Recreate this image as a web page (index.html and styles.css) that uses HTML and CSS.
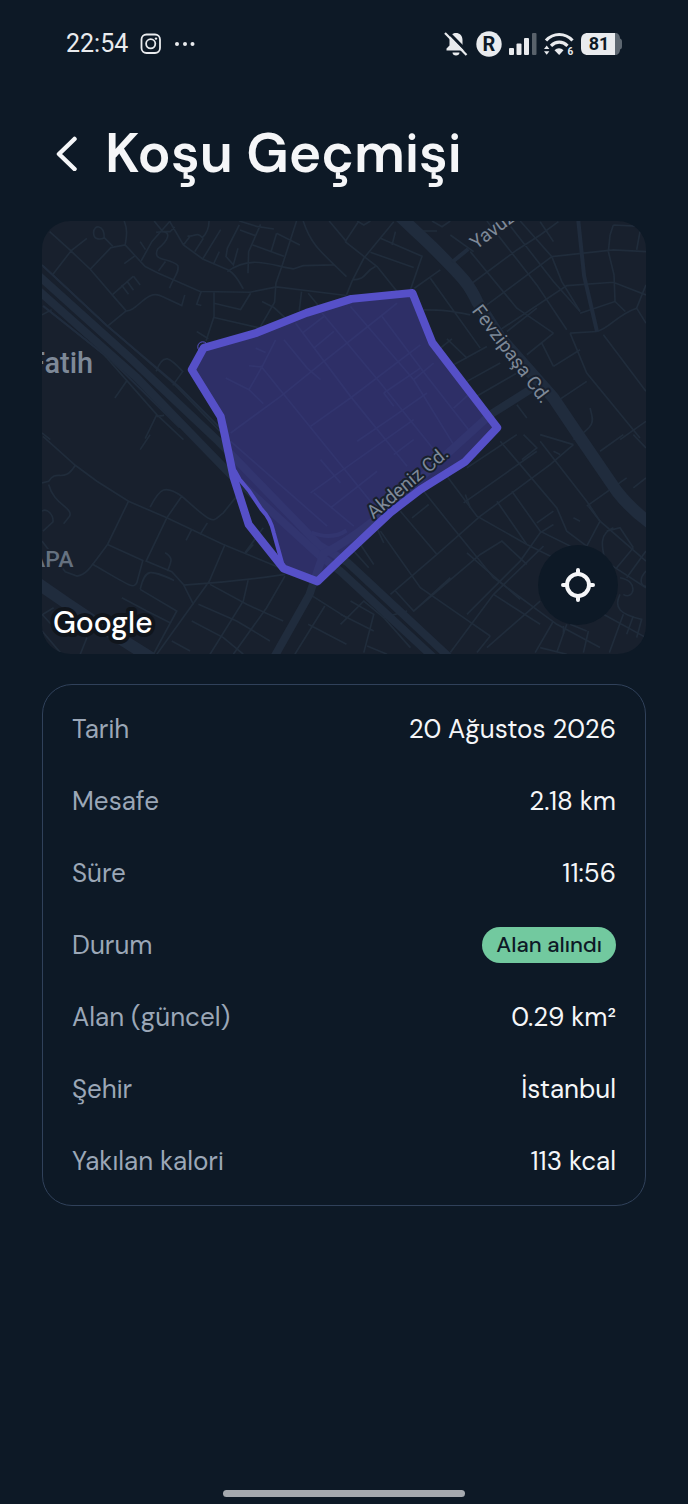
FILE: index.html
```html
<!DOCTYPE html>
<html lang="tr">
<head>
  <meta charset="UTF-8">
  <meta name="viewport" content="width=device-width, initial-scale=1.0">
  <title>Koşu Geçmişi</title>
  <link rel="stylesheet" href="styles.css">
</head>
<body>
  <div class="status-bar">
    <div class="status-group">
      <span class="clock">22:54</span>
      <svg class="icon-instagram" width="22" height="22" viewBox="0 0 22 22" fill="none" stroke="currentColor" stroke-width="1.8">
        <rect x="1.5" y="1.5" width="18.5" height="18.5" rx="5"/>
        <circle cx="10.7" cy="10.8" r="4.6"/>
        <circle cx="16" cy="5.6" r="1.2" fill="currentColor" stroke="none"/>
      </svg>
      <svg width="22" height="6" viewBox="0 0 22 6" fill="currentColor">
        <circle cx="3" cy="3" r="2"/>
        <circle cx="11" cy="3" r="2"/>
        <circle cx="18.5" cy="3" r="2"/>
      </svg>
    </div>
    <div class="status-group status-right">
      <svg width="26" height="28" viewBox="0 0 26 28">
        <path d="M3.5 20.5v-2l3-3V10c0-4.5 3-7 6.5-7s6.5 2.5 6.5 7v5.500l3 3v2z" fill="currentColor"/>
        <path d="M9.5 22.5h7c0 2-1.5 3-3.5 3s-3.5-1-3.5-3z" fill="currentColor"/>
        <path d="M4 1 25.5 23" stroke="#0d1926" stroke-width="3"/>
        <path d="M2 3 23.5 25" stroke="currentColor" stroke-width="2.2"/>
      </svg>
      <svg width="26" height="26" viewBox="0 0 26 26">
        <circle cx="13" cy="13" r="12.7" fill="currentColor"/>
        <text class="badge-letter" x="13" y="20" text-anchor="middle">R</text>
      </svg>
      <svg width="28" height="24" viewBox="0 0 28 24" fill="currentColor">
        <rect x="0" y="16" width="5" height="7" rx="1"/>
        <rect x="7.5" y="11.5" width="5" height="11.5" rx="1"/>
        <rect x="15" y="6" width="5" height="17" rx="1"/>
        <rect x="23" y="1" width="4.5" height="22" rx="1" opacity="0.35"/>
      </svg>
      <svg width="30" height="26" viewBox="0 0 30 26">
        <path d="M2 9.5C9.5 1.5 21 1.5 28.5 9.5" fill="none" stroke="currentColor" stroke-width="3.2"/>
        <path d="M7 14.8c5-5 11.5-5 16.5 0" fill="none" stroke="currentColor" stroke-width="3.2"/>
        <path d="M15.2 24 10.5 19.2c2.5-2.7 6.5-2.7 9 0z" fill="currentColor"/>
        <path d="M0 18 2.7 14.5 5.4 18zM0 20.2h5.400L2.7 23.7z" fill="currentColor"/>
        <text class="wifi-gen" x="23.5" y="24">6</text>
      </svg>
      <svg width="41" height="24" viewBox="0 0 41 24">
        <path d="M34 1c3 0 5 2 5 5.5 1.5.5 2 1.5 2 3v5c0 1.5-.5 2.500-2 3 0 3.5-2 5.5-5 5.5z" fill="#5d6771"/>
        <path d="M7 1h27v22H7c-4.500 0-7-2.500-7-7V8c0-4.500 2.500-7 7-7z" fill="currentColor"/>
        <text class="battery-level" x="18" y="18" text-anchor="middle">81</text>
      </svg>
    </div>
  </div>

  <header class="page-header">
    <button class="back-btn" type="button" aria-label="Geri">
      <svg width="24" height="36" viewBox="0 0 24 36" fill="none" stroke="currentColor" stroke-width="4.5" stroke-linecap="round" stroke-linejoin="round">
        <path d="M18.5 4 3 19l15.5 15"/>
      </svg>
    </button>
    <h1>Koşu Geçmişi</h1>
  </header>

  <main class="content">
    <section class="map">
      <svg class="map-canvas" viewBox="0 0 605 434" role="img" aria-label="Koşu alanı haritası">
        <!-- side streets, one group per quarter of the map -->
        <g class="streets" transform="translate(-5 -6) scale(0.3333)">
          <path d="M38 50 102 108 160 163 226 240 268 288M102 108 48 178M102 108 150 70M160 163 222 98 265 90 325 155 365 175 490 230 640 232 720 216 930 242"/>
          <path d="M202 68c0-40-32-40-32-15s25 20 32 15l26 26M262 18c12 30 6 50 3 72M295 122 262 146M310 80 326 104M400 18 345 80 313 138M226 240 290 184M254 210 275 238M270 198 290 226M290 184 310 210"/>
          <path d="M358 52c60-10 30 30 5 50-20 40 40 25 60 50 6 18-12 35-25 68M365 168 386 140M352 18 378 50 400 50 414 36M398 18 440 90 498 132 575 165C600 180 606 200 620 222M440 90 460 64M500 70 474 110M517 18c0 20-10 40-20 50-18-20-24 0-45-5"/>
          <path d="M552 44 498 132M608 30 572 100 568 125 590 150 604 100M548 110 530 148M572 170C640 120 700 150 770 162L800 152 892 150M608 18 660 34 712 42M610 45 656 62M672 28 636 110 634 175M648 90 742 124M720 55 704 108M720 55 790 90M780 18 738 148 718 205 714 262 660 355M800 18C820 80 840 100 930 185M878 18 930 80"/>
          <path d="M268 288C300 292 330 220 375 244L435 272 444 240M268 288 212 334M494 228 480 268 494 272M532 232V305L508 378M532 265 612 284 642 235M532 308 672 340M676 260 712 278 790 350M795 230 788 288M815 235 860 290"/>
          <path d="M15 150 208 330 410 506 550 650M15 300 44 285M40 290 200 418 360 600 440 675M270 498 234 550M360 600 325 672M360 605 382 602M358 470C380 410 400 430 438 470L408 512M15 655 40 675M480 350 515 372"/>
        </g>
        <g class="streets" transform="translate(299 -6) scale(0.3333)">
          <path d="M55 18 14 80M90 18 70 30 50 18M14 80 75 128 110 155 170 230M160 20 70 130 35 198 18 240M120 70 245 124 210 225M90 112 220 158M165 50 155 90M35 195C80 195 70 170 105 155M275 18 305 35 330 18M240 48 290 48"/>
          <path d="M222 220 300 165M270 190 420 400M250 285C310 285 330 288 390 300M300 400 335 372M320 372 380 430M390 110 530 280 640 355M395 205 530 105 600 60 655 20M440 18 590 210 680 345M500 20 640 200 720 290M330 60 400 110"/>
          <path d="M540 18 635 125 820 105 918 110M635 125 665 200 720 290M440 270 635 125M480 345 680 212 820 202 918 240M600 20 640 80M810 60 805 110 822 180 825 260 720 295M820 30 810 60M900 50 890 105M825 260 856 290M770 350C810 340 830 300 890 280L918 210M890 280 918 325M820 30 918 35"/>
          <path d="M340 450 440 395M500 350 590 280M380 500 480 445M400 550 530 475M560 420 640 355M605 385 640 455M690 355 740 475 900 670M790 360 918 530M640 455 720 405M690 355 770 350M650 560 740 500M750 580C760 620 770 630 700 675M530 570 560 610M840 675 918 620"/>
        </g>
        <g class="streets" transform="translate(-5 214) scale(0.3333)">
          <path d="M18 5 115 92 180 140 275 200 390 250 560 330 735 402M340 0 310 45M115 92C80 150 60 100 35 140L15 145M35 150C50 210 110 220 98 245L80 268M15 230C30 220 50 240 48 262L18 290M275 200 212 330C160 400 150 420 120 425L85 412 15 320"/>
          <path d="M340 218C370 160 385 150 435 185L390 250 328 380 405 412 440 450 470 510M435 185C540 280 525 260 560 235L600 185M465 285 448 318M512 265 490 300M212 330 318 378 300 445C290 465 280 455 165 388M385 355C410 370 405 380 392 410M310 465C325 400 340 405 412 438"/>
          <path d="M565 330 518 440 360 660M440 452C560 445 680 430 745 420M255 490 330 530 400 565M310 465 420 530 350 660M520 450 630 510 740 560M635 435 620 500 520 660M745 425 690 520 590 660M485 510 600 560 700 620M465 560 560 610 620 660M405 620 460 650M650 330 628 355M680 280 625 355"/>
          <path d="M820 480 930 550M865 515 775 660M815 570 930 630M15 540 70 600M15 590 70 655M150 610 130 660M15 620 60 660M18 540 50 520"/>
        </g>
        <g class="streets" transform="translate(299 214) scale(0.3333)">
          <path d="M250 170 330 270 460 430 650 570 780 640M180 230 290 360M120 290 240 460 370 550 450 605M90 240 130 325M60 330 100 390M320 125 410 245 560 330 660 380"/>
          <path d="M150 480 290 360 420 245 630 90 700 30M370 205 590 50M375 180 390 220M380 100 530 0M480 20 540 90 650 220 680 290 740 335M545 75 590 40 550 0M600 20 740 200 780 260 918 380M640 50 660 60M700 30 600 0M470 200 560 330M515 170 600 290 720 350M590 265 640 230M780 260 740 335M700 250 720 260"/>
          <path d="M215 250 265 210M40 350 85 400M165 470 220 530 420 360 485 320 560 390M220 530 330 430M380 355 540 495M380 540 540 380 600 295 640 270M440 640 600 500M330 655 460 480 610 335M450 605 410 655M460 480 600 570M640 560 585 655M680 570 650 655M745 590 730 655M600 640 680 660"/>
          <path d="M0 570 70 500 130 550 200 530M30 500 100 540 70 655M80 635 140 660M0 540 100 590M130 550 210 640M740 215 860 130M745 215 780 260M780 50 850 0M880 160 918 130M880 0 918 40M820 280C770 300 790 350 795 380L918 460M880 340 830 400M800 290 840 280 880 340"/>
          <path d="M918 350 860 430M918 410C890 440 910 460 918 455M790 540 918 610M850 480C880 500 900 440 840 430M840 480C820 520 840 540 905 555L890 610M850 540 808 655M880 545 860 600M670 575 670 600M690 570 740 590"/>
        </g>

        <!-- streets inside the captured area -->
        <path class="area-base" d="M162 127 215 112 265 92 316 77 371 72 391 122 456 207 424 241 379 269 349 292 299 339 276 361 242 348 230 301 208 271 192 257 183 214 179 196 150 149Z"/>
        <g class="streets" transform="translate(139 59) scale(0.3333)">
          <path d="M150 460 300 350 430 245 600 110 650 70M135 295 205 330 248 372M205 330 245 260 285 180M225 205 255 218M205 258 245 262M240 258 440 505 590 690M310 180 380 265 420 300M345 130 510 350 680 560M425 100 600 310 760 510M510 80 700 300 820 495M605 110 740 290 865 450"/>
          <path d="M390 440 510 355 720 195M365 160 430 110M400 205 460 155M610 340 720 265M610 340 640 380M700 300 760 250M820 385 870 340M530 485 640 410 740 340M390 640 530 540 700 420M400 640 520 740M450 685 590 575M640 525 700 480M150 485 440 740M420 540 480 610"/>
        </g>

        <g class="roads">
          <path class="road-edge" d="M1 45 64 104 137 166 178 207M1 85 70 140 138 207"/>
          <path class="road-large" d="M357-6 390 25C425 60 428 64 436 81L459 117 512 177 537 214 576 271Q590 289 611 304"/>
          <path class="road-large" d="M-4 363Q50 401 110 438"/>
          <path class="road-medium" d="M-3 55 88 137 177 221 278 325 306 342 409 438"/>
          <path class="road-medium" d="M-3 70 95 157 155 219 187 252 278 335 299 351 393 438"/>
          <path class="road-medium" d="M233 436 268 374 282 333Q300 325 330 302L449 194 492 167"/>
          <path class="road-small" d="M411 41 427 28M537-2 543 55 556 111"/>
          <path class="road-small" d="M270 312Q290 320 305 310"/>
        </g>

        <path class="area-fill" d="M162 127 215 112 265 92 316 77 371 72 391 122 456 207 424 241 379 269 349 292 299 339 276 361 242 348 230 301 208 271 192 257 183 214 179 196 150 149Z"/>
        <circle class="start-ring" cx="161" cy="126" r="5"/>
        <path class="area-inner" d="M193 250 198 259 208 271 220 289Q229 298 232 312L242 348"/>
        <path class="area-line" d="M162 127 215 112 265 92 310 78 371 72 391 122 456 207 424 241 379 269 349 292 299 339 276 361 242 348 207 304 192 257 183 214 179 196 150 149Z"/>

        <text class="label-district" x="-13" y="152">Fatih</text>
        <text class="label-area" x="-12" y="347">APA</text>
        <text class="label-street" transform="translate(435 29) rotate(-37)">Yavuz</text>
        <text class="label-street" transform="translate(430 90) rotate(53)">Fevzipaşa Cd.</text>
        <text class="label-street" transform="translate(332 299) rotate(-40)">Akdeniz Cd.</text>
        <text class="label-brand" x="11" y="413">Google</text>
      </svg>
      <button class="locate-btn" type="button" aria-label="Konumu ortala">
        <svg width="36" height="36" viewBox="0 0 36 36" fill="none" stroke="currentColor" stroke-width="4" stroke-linecap="round">
          <circle cx="18" cy="18" r="11"/>
          <path d="M18 3v4M18 29v4M3 18h4M29 18h4"/>
        </svg>
      </button>
    </section>

    <dl class="details">
      <div class="row"><dt>Tarih</dt><dd>20 Ağustos 2026</dd></div>
      <div class="row"><dt>Mesafe</dt><dd>2.18 km</dd></div>
      <div class="row"><dt>Süre</dt><dd>11:56</dd></div>
      <div class="row"><dt>Durum</dt><dd><span class="badge">Alan alındı</span></dd></div>
      <div class="row"><dt>Alan (güncel)</dt><dd>0.29 km²</dd></div>
      <div class="row"><dt>Şehir</dt><dd>İstanbul</dd></div>
      <div class="row"><dt>Yakılan kalori</dt><dd>113 kcal</dd></div>
    </dl>
  </main>

  <div class="home-indicator"></div>
</body>
</html>
```
FILE: styles.css
```css
* {
  box-sizing: border-box;
}
body {
  margin: 0;
  min-height: 100vh;
  display: flex;
  flex-direction: column;
  background-color: #0d1926;
  color: #f5f6f8;
  font-family: "DM Sans", Inter, sans-serif;
}
button {
  padding: 0;
  border: none;
  color: inherit;
  cursor: pointer;
}
svg {
  display: block;
}

/* Status bar */
.status-bar {
  display: flex;
  justify-content: space-between;
  align-items: center;
  height: 87px;
  padding: 0 66px;
  color: #e9ebee;
}
.status-group {
  display: flex;
  align-items: center;
  gap: 12px;
}
.status-right {
  gap: 7px;
}
.clock {
  font-family: Roboto, sans-serif;
  font-size: 25px;
}
.badge-letter,
.battery-level,
.wifi-gen {
  font-family: Roboto, sans-serif;
  font-weight: 700;
}
.badge-letter {
  font-size: 20px;
  fill: #0d1926;
}
.battery-level {
  font-size: 18px;
  fill: #0d1926;
}
.wifi-gen {
  font-size: 10px;
  fill: currentColor;
}

/* Header */
.page-header {
  display: flex;
  align-items: center;
  gap: 25px;
  height: 134px;
  padding: 0 56px 3px;
}
.back-btn {
  background: none;
}
.page-header h1 {
  margin: 0;
  font-size: 55px;
  font-weight: 600;
  line-height: 72px;
}

/* Map */
.content {
  padding: 0 42px;
}
.map {
  position: relative;
  border-radius: 28px;
  overflow: hidden;
  background-color: #18202d;
}
.map-canvas {
  width: 100%;
  height: auto;
}
.streets path {
  fill: none;
  stroke: #202c3b;
  stroke-width: 5;
}
.roads path {
  fill: none;
  stroke: #202c3d;
}
.roads .road-edge {
  stroke-width: 2;
}
.roads .road-large {
  stroke-width: 12;
}
.roads .road-medium {
  stroke-width: 8;
}
.roads .road-small {
  stroke-width: 4;
}
.area-base {
  fill: #18202d;
}
.area-fill {
  fill: rgba(68, 62, 162, 0.5);
}
.area-line,
.area-inner,
.start-ring {
  fill: none;
  stroke: #5650c8;
  stroke-linejoin: round;
}
.area-line {
  stroke-width: 8;
}
.area-inner {
  stroke-width: 4;
}
.start-ring {
  stroke-width: 1;
}
.map-canvas text {
  font-family: Roboto, sans-serif;
  fill: #7e8998;
  stroke: #18202d;
  stroke-width: 4;
  stroke-linejoin: round;
  paint-order: stroke;
}
.map-canvas .label-district {
  font-size: 29px;
  font-weight: 500;
}
.map-canvas .label-area {
  font-size: 23px;
  font-weight: 500;
  fill: #657180;
}
.map-canvas .label-street {
  font-size: 19px;
}
.map-canvas .label-brand {
  font-family: "DM Sans", Lato, sans-serif;
  font-size: 30px;
  font-weight: 500;
  fill: #ffffff;
  stroke: #10151c;
  stroke-width: 8;
}
.locate-btn {
  position: absolute;
  right: 28px;
  bottom: 29px;
  display: grid;
  place-items: center;
  width: 80px;
  height: 80px;
  border-radius: 50%;
  background-color: #0d1926;
}

/* Run details */
.details {
  margin: 30px 0 0;
  padding: 8px 29px;
  border: 1px solid #30415a;
  border-radius: 30px;
}
.row {
  display: flex;
  justify-content: space-between;
  align-items: center;
  height: 72px;
  font-size: 26px;
}
.row dt {
  color: #9ba7b7;
}
.row dd {
  margin: 0;
}
.badge {
  display: block;
  padding: 0 14px;
  border-radius: 18px;
  background-color: #72c99f;
  color: #0d1926;
  font-size: 22px;
  font-weight: 500;
  line-height: 36px;
}

.home-indicator {
  width: 36%;
  max-width: 242px;
  height: 7px;
  margin: auto auto 7px;
  border-radius: 4px;
  background-color: #a5a9af;
}
```
